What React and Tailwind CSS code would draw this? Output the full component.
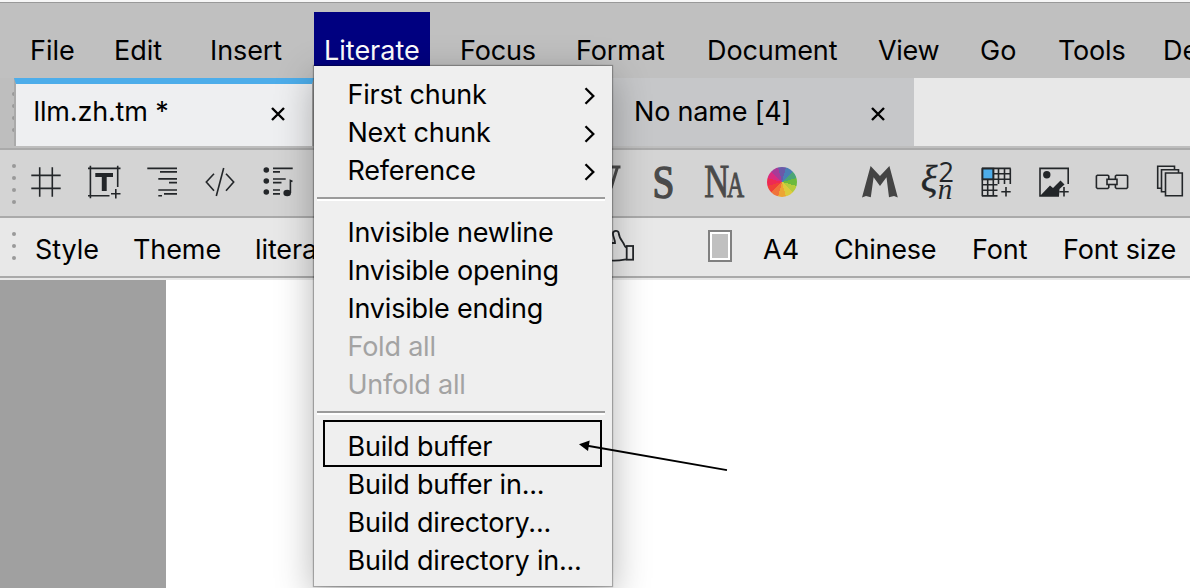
const menus = [
  ['File', 'w-[84px]'],
  ['Edit', 'w-[96px]'],
  ['Insert', 'w-[115px] tracking-[-0.1px]'],
  ['Literate', 'w-[135px]'],
  ['Focus', 'w-[116px] tracking-[-0.15px]'],
  ['Format', 'w-[131px] tracking-[-0.1px]'],
  ['Document', 'w-[171px] tracking-[-0.1px]'],
  ['View', 'w-[102px] tracking-[-0.3px]'],
  ['Go', 'w-[78px]'],
  ['Tools', 'w-[105px] tracking-[-0.2px]'],
  ['Developer', 'w-[140px]'],
];

const INK = '#232629';

function Dots({ count }) {
  return (
    <div className="flex w-1 shrink-0 flex-col gap-2">
      {Array.from({ length: count }, (_, i) => (
        <span key={i} className="size-1 rounded-full bg-[#999999]" />
      ))}
    </div>
  );
}

function Icon({ x, w, children, className = '' }) {
  return (
    <svg
      className={`block h-[44px] shrink-0 overflow-visible ${className}`}
      width={w}
      height="44"
      viewBox={`${x} 160 ${w} 44`}
      fill="none"
      stroke={INK}
      strokeWidth="1.6"
    >
      {children}
    </svg>
  );
}

function Toolbar() {
  return (
    <div className="flex h-[68px] items-start border-b-2 border-[#aaaaaa] bg-[#d4d4d4] pt-[10px]">
      <div className="flex h-[44px] w-[30px] shrink-0 pt-1 pl-3">
        <Dots count={4} />
      </div>
      <Icon x={30} w={56}>
        <path d="M39.7 167.3V196.7M52.3 167.3V196.7M31.3 175.4H60.7M31.3 188.4H60.7" />
      </Icon>
      <Icon x={86} w={60}>
        <path d="M88 168.4H120.5M90.4 165.7V198.3M117.7 165.7V187M88 195.8H109.5M111 193.7H120.5M115.8 189V198.4" />
        <path d="M95.3 173H113V177H106.7V191H101.8V177H95.3Z" fill={INK} stroke="none" />
      </Icon>
      <Icon x={146} w={58}>
        <path d="M147.3 168.4H177M160 171.9H177M158.3 178.9H177M169 182.6H177M158.3 190H177M164 193.9H177M158.3 195.7H162" />
      </Icon>
      <Icon x={204} w={58}>
        <path d="M214 173.7L206.3 182L214 190.8M223.7 168L216.3 196M226 173.7L233.7 182L226 190.8" />
      </Icon>
      <Icon x={262} w={338}>
        <path d="M273 168.4H292.7M273 171.9H280M273 179H285.7M273 182.6H281.5M273 190H280M273 193.9H280M290.4 193V180.5L292.5 181.5" />
        <g fill={INK} stroke="none">
          <circle cx="266.3" cy="170" r="2.8" />
          <circle cx="266.3" cy="181" r="2.8" />
          <circle cx="266.3" cy="192" r="2.8" />
          <ellipse cx="287.2" cy="193" rx="3.8" ry="3.3" />
        </g>
      </Icon>
      <Icon x={600} w={45}>
        <path d="M608 167H620.5M617.5 167L611 188" stroke="#4a4a4a" strokeWidth="3" />
      </Icon>
      <Icon x={645} w={45}>
        <text
          transform="translate(652.6 197.6) scale(.84 1)"
          className="font-['Liberation_Serif']"
          fontSize="47"
          fill="#4a4a4a"
          stroke="#4a4a4a"
          strokeWidth="1.5"
        >
          S
        </text>
      </Icon>
      <Icon x={690} w={70}>
        <g fill="#4a4a4a" stroke="#4a4a4a" strokeWidth="1" className="font-['Liberation_Serif']">
          <text transform="translate(704.3 197) scale(.75 1)" fontSize="46">N</text>
          <text transform="translate(727 197) scale(.66 1)" fontSize="36">A</text>
        </g>
      </Icon>
      <div className="flex h-[44px] w-[98px] shrink-0 items-center pl-[7px]">
        <div className="size-[30px] rounded-full bg-[conic-gradient(#6a5aa8_0deg_15deg,#4a7fb5_15deg_45deg,#4aa577_45deg_75deg,#6cba3c_75deg_105deg,#b5cc3c_105deg_135deg,#dccb3c_135deg_165deg,#eda534_165deg_195deg,#f0733a_195deg_225deg,#f04038_225deg_255deg,#ee2a52_255deg_285deg,#d92b80_285deg_315deg,#a93a98_315deg_345deg,#6a5aa8_345deg)]" />
      </div>
      <Icon x={858} w={54}>
        <path
          d="M862 197.6L870.6 166L880 176L889.4 166L897.8 197.6L894 196L889 197.3L886.5 177.3L880 186L873.6 177.3L870.8 197.3L866 196Z"
          fill="#444444"
          stroke="none"
        />
      </Icon>
      <Icon x={912} w={62}>
        <g fill={INK} stroke="none">
          <text transform="translate(920.8 192) scale(1.02 1)" fontSize="38" stroke={INK} strokeWidth=".4" className="font-['Liberation_Serif'] italic">ξ</text>
          <text x="938.6" y="182" fontSize="27" className="font-['Open_Sans']">2</text>
          <text x="937.7" y="199.3" fontSize="29" className="font-['Liberation_Serif'] italic">n</text>
        </g>
      </Icon>
      <Icon x={974} w={60}>
        <rect x="982.5" y="168.5" width="11" height="11" fill="#4dadea" />
        <path d="M982.3 168.3V196.3M993.3 168.3V196.3M987.7 179.3V196.3M982 168.4H1010.7M1010.3 168.4V184M998.5 168.4V184M1004.5 168.4V184M993 173.8H1010.5M982 179.3H1010.5M982 184.7H997.5M982 190.3H997.5M982 195.9H997.5M1001.3 191.8H1010.7M1006 187V196.5" />
      </Icon>
      <Icon x={1034} w={56}>
        <path d="M1059 195.9H1040V168.4H1068.2V184M1059.3 191.8H1068.7M1064 187V196.5" />
        <circle cx="1046.8" cy="174.7" r="3.7" fill={INK} stroke="none" />
        <path d="M1040 196L1050 185.5L1053 188L1060.5 180.5L1064.5 184.5L1059.5 189L1059 196Z" fill={INK} stroke="none" />
      </Icon>
      <Icon x={1090} w={60}>
        <path d="M1108.8 179.5V176.2L1107.8 175.2H1097.4L1096.4 176.2V187.5L1097.4 188.5H1107.8L1108.8 187.5V184.5M1115.4 179.5V176.2L1116.4 175.2H1126.6L1127.6 176.2V187.5L1126.6 188.5H1116.4L1115.4 187.5V184.5" />
        <rect x="1107" y="179.3" width="10" height="5.2" />
      </Icon>
      <Icon x={1150} w={40}>
        <path d="M1165.5 173H1182.3V195.7H1165.5ZM1165.5 191.8H1161.5V169.7H1178.5V173M1161.5 188.2H1157.7V166.3H1174.5V169.7" />
      </Icon>
    </div>
  );
}

function FormatBar() {
  return (
    <div className="flex h-[60px] items-start overflow-hidden border-b-2 border-[#aaaaaa] bg-[#e8e8e8] text-[27px] leading-[64px] whitespace-nowrap">
      <div className="w-[35px] shrink-0 pt-[14px] pl-3">
        <Dots count={3} />
      </div>
      <span className="w-[98px] shrink-0 tracking-[-0.1px]">Style</span>
      <span className="w-[122px] shrink-0 tracking-[-0.1px]">Theme</span>
      <span className="w-[345px] shrink-0 tracking-[-0.1px]">literate</span>
      <svg className="mt-[10px] block shrink-0" width="108" height="38" viewBox="600 228 108 38" fill="none" stroke={INK} strokeWidth="1.8">
        <path d="M608 243H615C615 239 612.5 236 613 233C613.5 230.5 618 230 618.7 233C619 237 621 240 623 242.5C624.5 244.5 624 246 626 247.5M608 260C613 261.5 620 260.5 626 259.3" />
        <rect x="626.7" y="246" width="6.4" height="13.7" />
      </svg>
      <div className="mt-3 h-8 w-6 shrink-0 border-2 border-[#808080] bg-white p-[2px]">
        <div className="h-full bg-[#c0c0c0]" />
      </div>
      <span className="ml-[31px] w-[71px] shrink-0">A4</span>
      <span className="w-[138px] shrink-0 tracking-[-0.25px]">Chinese</span>
      <span className="w-[91px] shrink-0 tracking-[-0.1px]">Font</span>
      <span className="shrink-0 tracking-[-0.15px]">Font size</span>
    </div>
  );
}

function Item({ children, arrow, disabled }) {
  return (
    <div className={`flex h-[38px] items-center justify-between pr-4 pl-[33.5px] ${disabled ? 'text-[#a3a3a3]' : 'text-black'}`}>
      <span>{children}</span>
      {arrow && (
        <svg className="mt-[2px]" width="13" height="20" viewBox="0 0 13 20" fill="none" stroke="black" strokeWidth="2.3">
          <path d="M2.5 2.2L10.3 10L2.5 17.8" />
        </svg>
      )}
    </div>
  );
}

function Separator() {
  return (
    <div className="h-6 pt-[7px] pr-[7px] pl-[3px]">
      <div className="h-1 border-t-2 border-[#9b9b9b] bg-white" />
    </div>
  );
}

function Dropdown() {
  return (
    <div className="absolute top-[66px] left-[314px] h-[520px] w-[298px] bg-[#efefef] pt-[10px] text-[27px] leading-[38px] tracking-[-0.22px] whitespace-nowrap shadow-[0_0_1px_1px_rgba(0,0,0,0.28),0_10px_36px_rgba(0,0,0,0.3)]">
      <Item arrow>First chunk</Item>
      <Item arrow>Next chunk</Item>
      <Item arrow>Reference</Item>
      <Separator />
      <Item>Invisible newline</Item>
      <Item>Invisible opening</Item>
      <Item>Invisible ending</Item>
      <Item disabled>Fold all</Item>
      <Item disabled>Unfold all</Item>
      <Separator />
      <Item>Build buffer</Item>
      <Item>Build buffer in...</Item>
      <Item>Build directory...</Item>
      <Item>Build directory in...</Item>
    </div>
  );
}

function Close() {
  return (
    <svg width="14" height="14" viewBox="0 0 14 14" fill="none" stroke="black" strokeWidth="2.4">
      <path d="M1 1L13 13M13 1L1 13" />
    </svg>
  );
}

export default function App() {
  return (
    <div className="relative flex h-[588px] w-[1190px] flex-col overflow-hidden bg-[#f6f6f6] pt-[2px] font-['Inter',sans-serif] text-black">
      <div className="flex h-[76px] shrink-0 overflow-hidden border-t border-[#999999] bg-[#c0c0c0] pt-[9px] pl-[30px] text-[27px] leading-[78px] whitespace-nowrap">
        {menus.map(([name, width]) =>
          name === 'Literate' ? (
            <div key={name} className={`shrink-0 ${width}`}>
              <div className="-ml-[11px] h-[66px] w-[116px] bg-[#000080] pl-[10px] text-white">{name}</div>
            </div>
          ) : (
            <span key={name} className={`shrink-0 ${width}`}>{name}</span>
          )
        )}
      </div>
      <div className="flex h-[72px] shrink-0 border-b-2 border-[#aaaaaa] bg-[#bebebe] pb-[2px] text-[27px]">
        <div className="w-[14px] shrink-0 overflow-hidden pt-[14px] pl-3">
          <Dots count={4} />
        </div>
        <div className="flex w-[300px] items-center justify-between border-x-2 border-t-[6px] border-x-[#aaaaaa] border-t-[#4dadea] bg-[#eeeff1] pr-[27px] pb-[6px] pl-[17.5px]">
          <span className="tracking-[-0.15px]">llm.zh.tm *</span>
          <span className="pt-[3px]"><Close /></span>
        </div>
        <div className="w-[300px] bg-[#c6c7c9]" />
        <div className="flex w-[300px] items-center justify-between bg-[#c6c7c9] pr-[29px] pl-[20px]">
          <span className="pt-px tracking-[-0.2px]">No name [4]</span>
          <span className="pt-[3px]"><Close /></span>
        </div>
        <div className="flex-1 bg-[#e8e8e8]" />
      </div>
      <Toolbar />
      <FormatBar />
      <div className="flex flex-1 border-t-2 border-[#e8e8e8] bg-white">
        <div className="w-[166px] bg-[#a0a0a0]" />
      </div>
      <Dropdown />
      <div className="absolute top-[420px] left-[323px] h-[47px] w-[279px] border-2 border-black" />
      <svg className="absolute top-[435px] left-[575px]" width="160" height="42" viewBox="575 435 160 42">
        <path d="M727 470.2L586 445.5" stroke="black" strokeWidth="1.8" />
        <path d="M579 444.3L589.7 440.5L588 451Z" fill="black" />
      </svg>
    </div>
  );
}
